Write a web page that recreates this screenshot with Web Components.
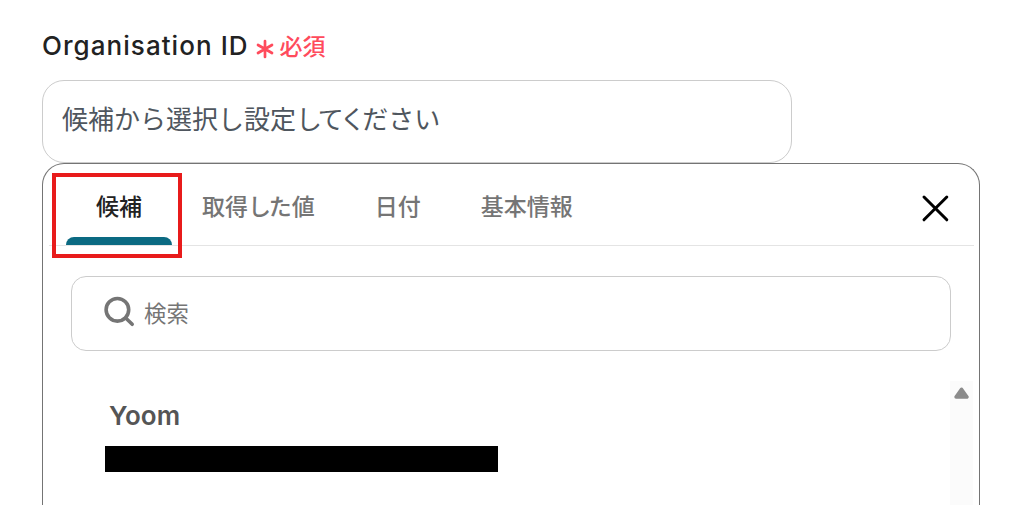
<!DOCTYPE html>
<html lang="ja">
<head>
<meta charset="utf-8">
<title>Organisation ID</title>
<style>
  body {
    margin: 0;
    height: 505px;
    overflow: hidden;
    background: #ffffff;
    font-family: Inter, "Noto Sans CJK JP", sans-serif;
    color: #222222;
  }

  /* tighter kana pairs */
  .kana {
    letter-spacing: -0.13em;
  }

  tab-item .kana {
    letter-spacing: -0.1em;
  }
</style>
</head>
<body>
<form-field>
  <field-label slot="label" data-required="必須">Organisation ID</field-label>
  <select-box>候補から選択し設定<span class="kana">してく</span>ださい</select-box>
  <candidate-panel>
    <tab-item slot="tabs" class="active">候補</tab-item>
    <tab-item slot="tabs">取得<span class="kana">し</span>た値</tab-item>
    <tab-item slot="tabs">日付</tab-item>
    <tab-item slot="tabs">基本情報</tab-item>
    <search-box slot="search">検索</search-box>
    <candidate-item>Yoom</candidate-item>
  </candidate-panel>
</form-field>

<script>
class FormField extends HTMLElement {
  constructor(){
    super();
    this.attachShadow({mode: 'open'});
    this.shadowRoot.innerHTML = `
    <style>
      :host {
        display: flex;
        flex-direction: column;
        box-sizing: border-box;
        height: 505px;
        padding: 28px 47px 0 42px;
      }
    </style>
    <slot name="label"></slot>
    <slot></slot>
    `;
  }
}

class FieldLabel extends HTMLElement {
  constructor(){
    super();
    this.attachShadow({mode: 'open'});
  }

  connectedCallback(){
    this.shadowRoot.innerHTML = `
    <style>
      :host {
        display: flex;
        align-items: center;
        height: 36px;
        margin-bottom: 16px;
        font-size: 26px;
        font-weight: 550;
        line-height: 36px;
        letter-spacing: 1.05px;
        white-space: nowrap;
      }

      svg {
        margin: 5px 0 0 7px;
      }

      .required {
        margin: 2px 0 0 6px;
        color: #ff4b5c;
        font-size: 23px;
        font-weight: 500;
        letter-spacing: 0;
      }
    </style>
    <slot></slot>
    <svg width="18" height="20" viewBox="0 0 18 20" fill="none" stroke="#ff4b5c" stroke-width="2.7" stroke-linecap="round">
      <path d="M9 2V18M2 6L16 14M16 6L2 14"/>
    </svg>
    <span class="required">${this.dataset.required}</span>
    `;
  }
}

class SelectBox extends HTMLElement {
  constructor(){
    super();
    this.attachShadow({mode: 'open'});
    this.shadowRoot.innerHTML = `
    <style>
      :host {
        display: block;
        box-sizing: border-box;
        width: 750px;
        height: 83px;
        flex: none;
        padding: 20px 19px 0;
        border: 1px solid #cccccc;
        border-radius: 22px;
        color: #4f565e;
        font-size: 26px;
        line-height: 38px;
        white-space: nowrap;
      }
    </style>
    <slot></slot>
    `;
  }
}

class CandidatePanel extends HTMLElement {
  constructor(){
    super();
    this.attachShadow({mode: 'open'});
    this.shadowRoot.innerHTML = `
    <style>
      :host {
        display: flex;
        flex-direction: column;
        flex: 1;
        box-sizing: border-box;
        width: 938px;
        border: 1px solid #747474;
        border-bottom: 0;
        border-radius: 22px 22px 0 0;
      }

      .tabs {
        display: flex;
        align-items: center;
        box-sizing: border-box;
        height: 82px;
        margin: 0 5px 0 6px;
        padding-left: 17px;
        border-bottom: 1px solid #e4e4e4;
      }

      .close {
        margin: 7px 24px 0 auto;
      }

      .body {
        display: flex;
        flex: 1;
        padding: 30px 6px 0 0;
      }

      .list {
        flex: 1;
        padding: 16px 0 0 62px;
      }

      .scrollbar {
        display: flex;
        justify-content: center;
        width: 23px;
        padding-top: 6px;
        background: #fbfbfb;
      }
    </style>
    <div class="tabs">
      <slot name="tabs"></slot>
      <svg class="close" width="30" height="30" viewBox="0 0 30 30" fill="none" stroke="#000000" stroke-width="3" stroke-linecap="round">
        <path d="M4 4L26.8 26.8M26.8 4L4 26.8"/>
      </svg>
    </div>
    <slot name="search"></slot>
    <div class="body">
      <div class="list"><slot></slot></div>
      <div class="scrollbar">
        <svg width="15" height="12" viewBox="0 0 15 12">
          <path d="M7.5 2.2L13 10H2Z" fill="#8b8b8b" stroke="#8b8b8b" stroke-width="3.4" stroke-linejoin="round"/>
        </svg>
      </div>
    </div>
    `;
  }
}

class TabItem extends HTMLElement {
  constructor(){
    super();
    this.attachShadow({mode: 'open'});
    this.shadowRoot.innerHTML = `
    <style>
      :host {
        display: block;
        position: relative;
        box-sizing: border-box;
        height: 81px;
        padding: 26px 30px 0;
        color: #757575;
        font-size: 23px;
        font-weight: 500;
        line-height: 34px;
        white-space: nowrap;
      }

      :host(.active) {
        color: #222222;
      }

      /* selected bar */
      :host(.active)::before {
        content: '';
        position: absolute;
        left: 0;
        right: 0;
        bottom: 0;
        height: 8px;
        border-radius: 8px 8px 0 0;
        background: #0b6a82;
      }

      /* red frame round the selected tab */
      :host(.active)::after {
        content: '';
        position: absolute;
        top: 9px;
        left: -14px;
        right: -10px;
        bottom: -13px;
        border: 4px solid #e81b1b;
      }
    </style>
    <slot></slot>
    `;
  }
}

class SearchBox extends HTMLElement {
  constructor(){
    super();
    this.attachShadow({mode: 'open'});
    this.shadowRoot.innerHTML = `
    <style>
      :host {
        display: flex;
        align-items: center;
        box-sizing: border-box;
        height: 75px;
        margin: 30px 28px 0;
        padding-left: 31px;
        border: 1px solid #cccccc;
        border-radius: 15px;
        color: #757575;
        font-size: 22.4px;
        line-height: 32px;
      }

      svg {
        margin: 0 9px 5px 0;
      }
    </style>
    <svg width="32" height="32" viewBox="0 0 32 32" fill="none" stroke="#757575" stroke-width="3.6" stroke-linecap="round">
      <circle cx="14.4" cy="14.8" r="11.3"/>
      <path d="M22.7 23L29.2 29.3"/>
    </svg>
    <slot></slot>
    `;
  }
}

class CandidateItem extends HTMLElement {
  constructor(){
    super();
    this.attachShadow({mode: 'open'});
    this.shadowRoot.innerHTML = `
    <style>
      :host {
        display: block;
        color: #555555;
        font-size: 26px;
        font-weight: 580;
        line-height: 38px;
      }

      .name {
        padding-left: 4px;
      }

      .mask {
        width: 393px;
        height: 26px;
        margin-top: 11px;
        background: #000000;
      }
    </style>
    <div class="name"><slot></slot></div>
    <div class="mask"></div>
    `;
  }
}

window.customElements.define('form-field', FormField);
window.customElements.define('field-label', FieldLabel);
window.customElements.define('select-box', SelectBox);
window.customElements.define('candidate-panel', CandidatePanel);
window.customElements.define('tab-item', TabItem);
window.customElements.define('search-box', SearchBox);
window.customElements.define('candidate-item', CandidateItem);
</script>
</body>
</html>
